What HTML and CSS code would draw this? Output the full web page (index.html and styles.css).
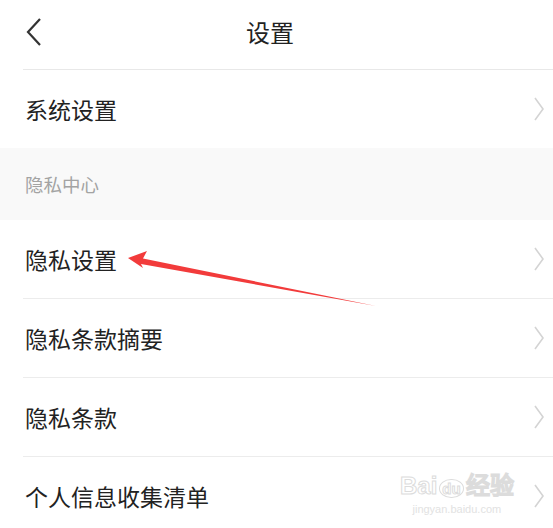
FILE: index.html
```html
<!DOCTYPE html>
<html lang="zh-CN">

<head>
    <meta charset="UTF-8">
    <title>设置</title>
    <link rel="stylesheet" href="styles.css">
</head>

<body>
    <div class="page">
        <div class="header">
            <svg class="back" width="20" height="30" viewBox="0 0 20 30">
                <polyline points="15,2 3,15 15,28" fill="none" stroke="#333" stroke-width="2.2" />
            </svg>
            <span class="title">设置</span>
        </div>

        <div class="row">
            <span class="label">系统设置</span>
            <svg class="arrow" width="12" height="26" viewBox="0 0 12 26">
                <polyline points="2,2 10,13 2,24" fill="none" stroke="#d4d4d4" stroke-width="1.6" />
            </svg>
        </div>

        <div class="section">隐私中心</div>

        <div class="row line">
            <span class="label">隐私设置</span>
            <svg class="arrow" width="12" height="26" viewBox="0 0 12 26">
                <polyline points="2,2 10,13 2,24" fill="none" stroke="#d4d4d4" stroke-width="1.6" />
            </svg>
        </div>
        <div class="row line">
            <span class="label">隐私条款摘要</span>
            <svg class="arrow" width="12" height="26" viewBox="0 0 12 26">
                <polyline points="2,2 10,13 2,24" fill="none" stroke="#d4d4d4" stroke-width="1.6" />
            </svg>
        </div>
        <div class="row line">
            <span class="label">隐私条款</span>
            <svg class="arrow" width="12" height="26" viewBox="0 0 12 26">
                <polyline points="2,2 10,13 2,24" fill="none" stroke="#d4d4d4" stroke-width="1.6" />
            </svg>
        </div>
        <div class="row">
            <span class="label">个人信息收集清单</span>
            <svg class="arrow" width="12" height="26" viewBox="0 0 12 26">
                <polyline points="2,2 10,13 2,24" fill="none" stroke="#d4d4d4" stroke-width="1.6" />
            </svg>
        </div>

        <!-- red annotation arrow -->
        <svg class="pointer" width="553" height="528" viewBox="0 0 553 528">
            <polygon points="128,258 147,251 143,258.5 376,306 141,264 143,268" fill="#f23b3b" />
        </svg>

        <div class="watermark">
            <div class="wm-logo">Bai<span class="wm-du">du</span>经验</div>
            <div class="wm-url">jingyan.baidu.com</div>
        </div>
    </div>
</body>

</html>
```

FILE: styles.css
```css
body {
    margin: 0;
    padding: 0;
    background: #fff;
    font-family: "Noto Sans CJK SC", "Noto Sans", sans-serif;
    color: #222;
}

.page {
    position: relative;
    width: 553px;
    height: 528px;
    overflow: hidden;
}

.header {
    position: relative;
    height: 69px;
    margin-left: 23px;
    border-bottom: 1px solid #e8e8e8;
    display: flex;
    align-items: center;
    justify-content: center;
}

.back {
    position: absolute;
    left: 2px;
    top: 17px;
}

.title {
    font-size: 24px;
    line-height: 30px;
    margin-left: -36px;
    margin-bottom: 6px;
    color: #222;
}

.row {
    height: 78px;
    margin-left: 23px;
    padding-left: 2px;
    padding-right: 8px;
    display: flex;
    align-items: center;
    justify-content: space-between;
}

.row.line {
    border-bottom: 1px solid #ececec;
}

.label {
    font-size: 23px;
    color: #222;
}

.section {
    height: 72px;
    background: #f9f9f9;
    padding-left: 25px;
    display: flex;
    align-items: center;
    font-size: 18.5px;
    color: #a3a3a3;
}

.pointer {
    position: absolute;
    left: 0;
    top: 0;
}

.watermark {
    position: absolute;
    left: 400px;
    top: 472px;
    color: #fff;
    font-family: "Liberation Sans", sans-serif;
    text-align: center;
}

.wm-logo {
    font-size: 24px;
    font-weight: bold;
    line-height: 28px;
    -webkit-text-stroke: 1px #dcdcdc;
}

.wm-du {
    font-size: 15px;
    background: #fff;
    border: 1.5px solid #dcdcdc;
    border-radius: 50%;
    padding: 0 2px;
    margin: 0 2px;
}

.wm-url {
    font-size: 11px;
    line-height: 13px;
    color: #e2e2e2;
    -webkit-text-stroke: 0;
}
```
